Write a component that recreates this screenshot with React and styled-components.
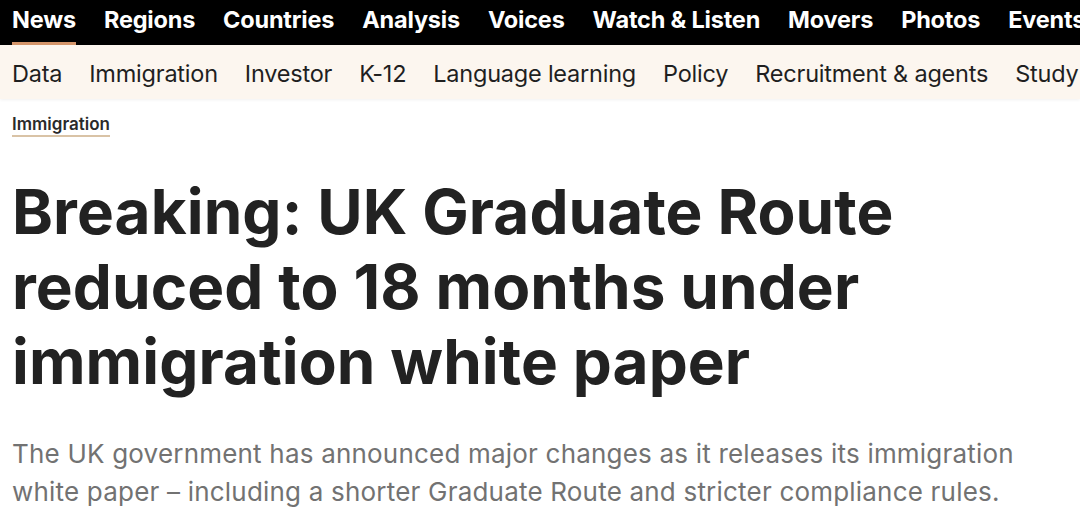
import React from "react";
import styled, { createGlobalStyle } from "styled-components";

const Global = createGlobalStyle`
  html, body { margin: 0; padding: 0; background: #ffffff; }
  body { font-family: Inter, "Noto Sans", sans-serif; overflow: hidden; }
  * { box-sizing: border-box; }
`;

const Page = styled.div`
  width: 1080px;
  height: 519px;
  overflow: hidden;
  background: #fff;
`;

const TopBar = styled.nav`
  height: 45px;
  background: #000;
  display: flex;
  align-items: stretch;
  gap: 28px;
  padding: 0 0 0 12px;
  white-space: nowrap;
  overflow: hidden;
`;

const TopItem = styled.a`
  position: relative;
  display: flex;
  align-items: center;
  color: #fff;
  font-size: 23.5px;
  font-weight: 700;
  letter-spacing: -0.2px;
  padding-bottom: 6px;
  text-decoration: none;
  &::after {
    content: "";
    position: absolute;
    left: 0;
    right: 0;
    bottom: 0;
    height: 3px;
    background: ${(p) => (p.$active ? "#d4956a" : "transparent")};
  }
`;

const SubBar = styled.nav`
  height: 54px;
  background: #fcf6ef;
  display: flex;
  align-items: center;
  gap: 27px;
  padding: 2px 0 0 12px;
  white-space: nowrap;
  overflow: hidden;
  box-shadow: 0 1px 3px rgba(0, 0, 0, 0.06);
`;

const SubItem = styled.a`
  color: #1f1f1f;
  font-size: 23.5px;
  font-weight: 400;
  letter-spacing: -0.22px;
  text-decoration: none;
`;

const Article = styled.article`
  padding: 15px 12px 0 12px;
`;

const Tag = styled.a`
  display: inline-block;
  color: #2a2a2a;
  font-size: 17px;
  font-weight: 600;
  padding-bottom: 1px;
  border-bottom: 2px solid #d9c3a6;
  text-decoration: none;
`;

const Headline = styled.h1`
  margin: 37px 0 0 0;
  color: #222;
  font-size: 62px;
  line-height: 75px;
  font-weight: 700;
  letter-spacing: 0.1px;
  width: 1060px;
`;

const Summary = styled.p`
  margin: 36px 0 0 0;
  color: #727272;
  font-size: 26px;
  line-height: 38px;
  font-weight: 400;
  letter-spacing: 0.2px;
  width: 1068px;
`;

const top = ["News", "Regions", "Countries", "Analysis", "Voices", "Watch & Listen", "Movers", "Photos", "Events"];
const sub = ["Data", "Immigration", "Investor", "K-12", "Language learning", "Policy", "Recruitment & agents", "Study"];

export default function App() {
  return (
    <Page>
      <Global />
      <TopBar>
        {top.map((t, i) => (
          <TopItem key={t} $active={i === 0}>{t}</TopItem>
        ))}
      </TopBar>
      <SubBar>
        {sub.map((t) => (
          <SubItem key={t}>{t}</SubItem>
        ))}
      </SubBar>
      <Article>
        <Tag>Immigration</Tag>
        <Headline>
          Breaking: UK Graduate Route
          <br />
          reduced to 18 months under
          <br />
          immigration white paper
        </Headline>
        <Summary>
          The UK government has announced major changes as it releases its immigration
          <br />
          white paper – including a shorter Graduate Route and stricter compliance rules.
        </Summary>
      </Article>
    </Page>
  );
}
